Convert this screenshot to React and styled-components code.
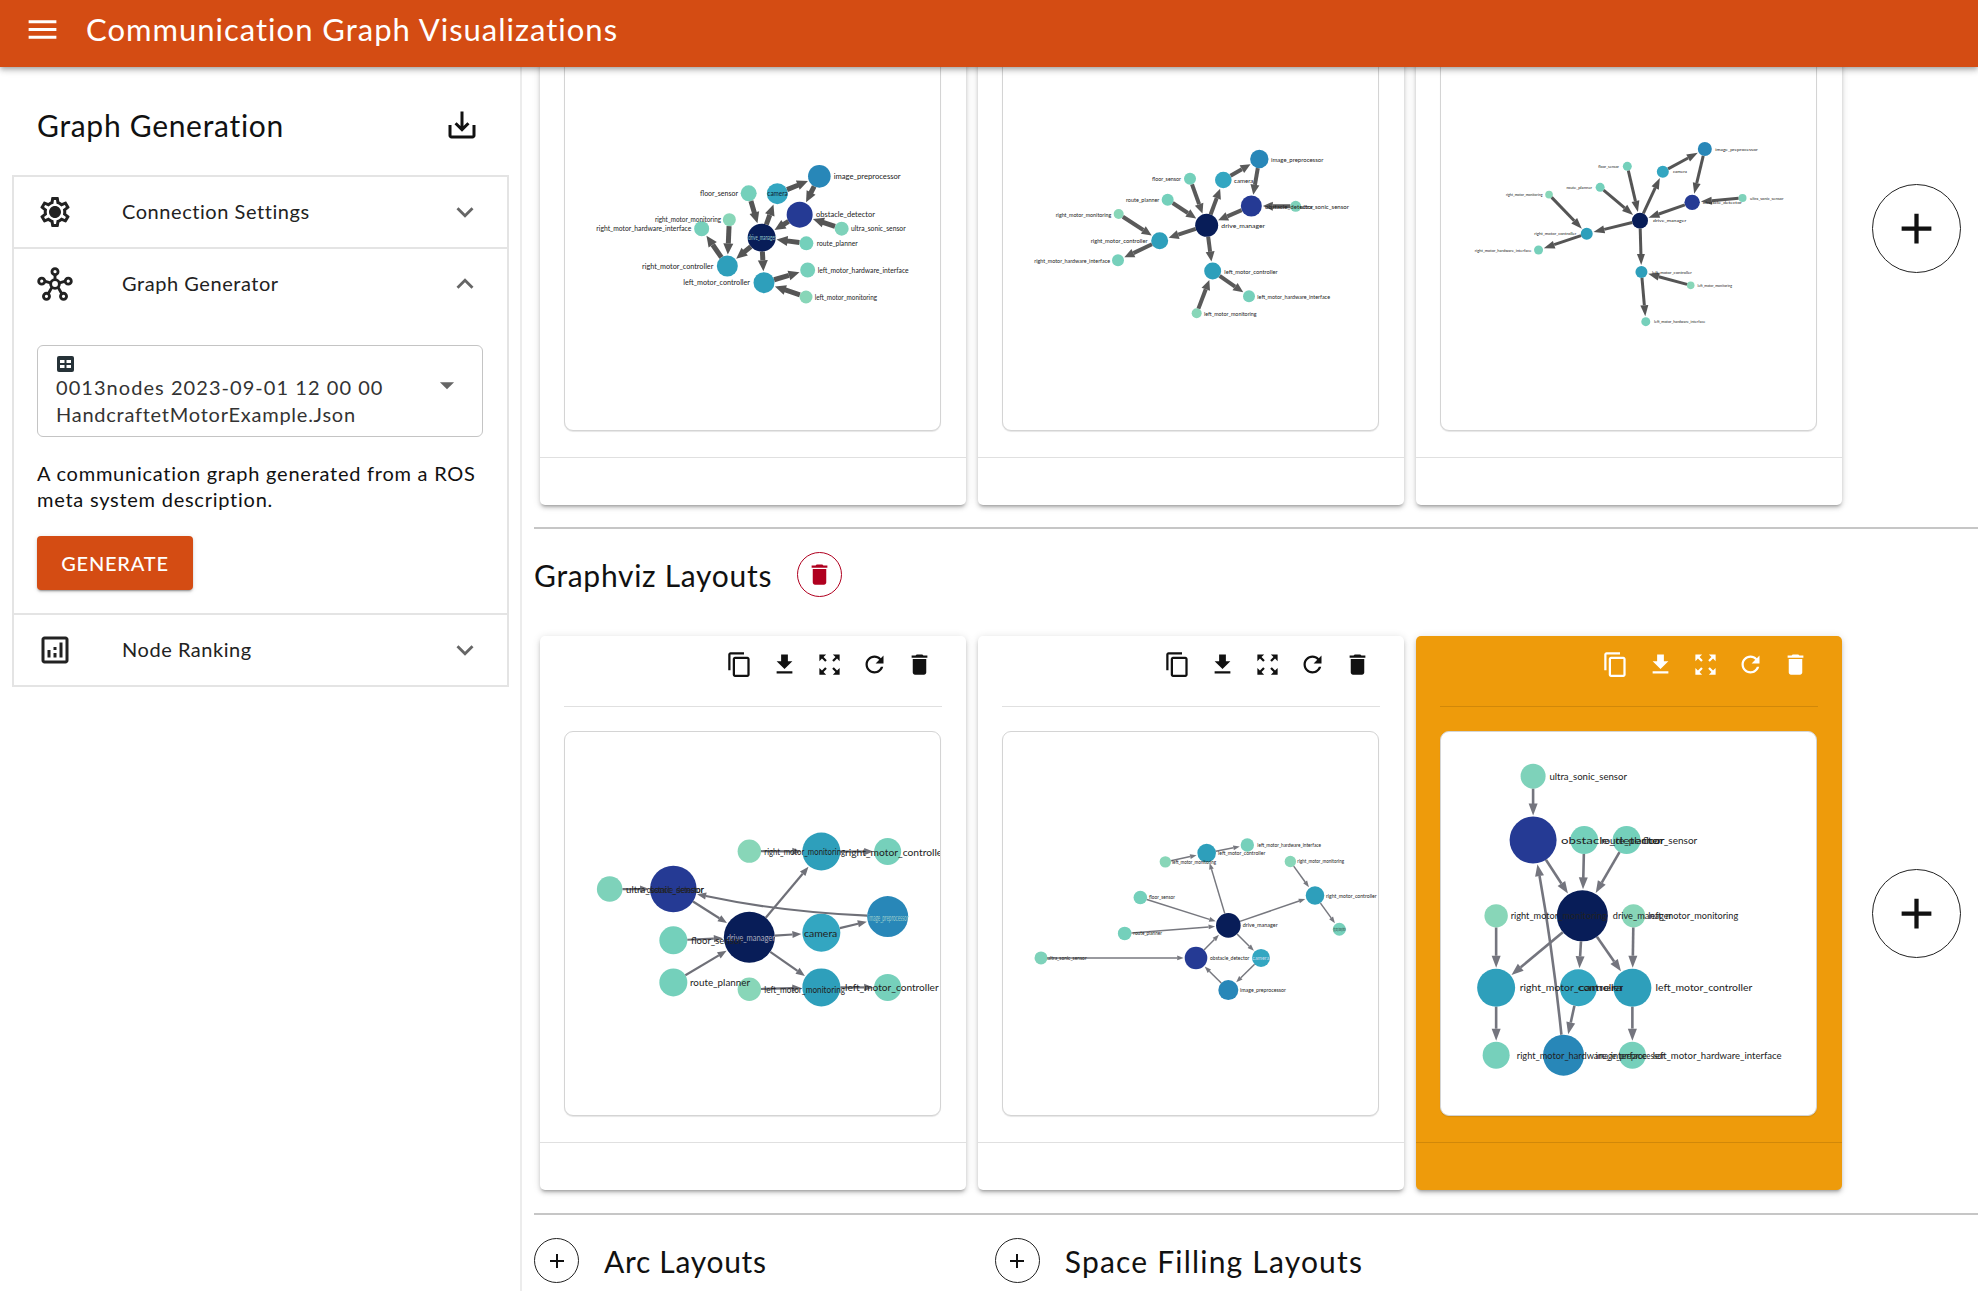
import React from 'react';
import styled, { createGlobalStyle } from 'styled-components';

const FONT = `Lato, "Open Sans", sans-serif`;
const ORANGE = '#d44c13';

const GlobalStyle = createGlobalStyle`
  * { box-sizing: border-box; }
  html, body { margin: 0; height: 100%; overflow: hidden; background: #fff; }
  body { font-family: ${FONT}; color: #111; }
`;

// icon paths
const P = {
  menu: 'M3 18h18v-2H3v2zm0-5h18v-2H3v2zm0-5h18V6H3v2z',
  save: 'M19 12v7H5v-7H3v7c0 1.1.9 2 2 2h14c1.1 0 2-.9 2-2v-7h-2zm-6 .67l2.59-2.58L17 11.5l-5 5-5-5 1.41-1.41L11 12.67V3h2z',
  gear: 'M19.43 12.98c.04-.32.07-.64.07-.98 0-.34-.03-.66-.07-.98l2.11-1.65c.19-.15.24-.42.12-.64l-2-3.46c-.09-.16-.26-.25-.44-.25-.06 0-.12.01-.17.03l-2.49 1c-.52-.4-1.08-.73-1.69-.98l-.38-2.65C14.46 2.18 14.25 2 14 2h-4c-.25 0-.46.18-.49.42l-.38 2.65c-.61.25-1.17.59-1.69.98l-2.49-1c-.06-.02-.12-.03-.18-.03-.17 0-.34.09-.43.25l-2 3.46c-.13.22-.07.49.12.64l2.11 1.65c-.04.32-.07.65-.07.98 0 .33.03.66.07.98l-2.11 1.65c-.19.15-.24.42-.12.64l2 3.46c.09.16.26.25.44.25.06 0 .12-.01.17-.03l2.49-1c.52.4 1.08.73 1.69.98l.38 2.65c.03.24.24.42.49.42h4c.25 0 .46-.18.49-.42l.38-2.65c.61-.25 1.17-.59 1.69-.98l2.49 1c.06.02.12.03.18.03.17 0 .34-.09.43-.25l2-3.46c.12-.22.07-.49-.12-.64l-2.11-1.65zm-1.98-1.71c.04.31.05.52.05.73 0 .21-.02.43-.05.73l-.14 1.13.89.7 1.08.84-.7 1.21-1.27-.51-1.04-.42-.9.68c-.43.32-.84.56-1.25.73l-1.06.43-.16 1.13-.2 1.35h-1.4l-.19-1.35-.16-1.13-1.06-.43c-.43-.18-.83-.41-1.23-.71l-.91-.7-1.06.43-1.27.51-.7-1.21 1.08-.84.89-.7-.14-1.13c-.03-.31-.05-.54-.05-.74s.02-.43.05-.73l.14-1.13-.89-.7-1.08-.84.7-1.21 1.27.51 1.04.42.9-.68c.43-.32.84-.56 1.25-.73l1.06-.43.16-1.13.2-1.35h1.39l.19 1.35.16 1.13 1.06.43c.43.18.83.41 1.23.71l.91.7 1.06-.43 1.27-.51.7 1.21-1.07.85-.89.7.14 1.13zM12 8c-2.21 0-4 1.79-4 4s1.79 4 4 4 4-1.79 4-4-1.79-4-4-4z',
  analytics: 'M19 3H5c-1.1 0-2 .9-2 2v14c0 1.1.9 2 2 2h14c1.1 0 2-.9 2-2V5c0-1.1-.9-2-2-2zm0 16H5V5h14v14zM7 12h2v5H7zm8-5h2v10h-2zm-4 7h2v3h-2zm0-4h2v2h-2z',
  more: 'M16.59 8.59L12 13.17 7.41 8.59 6 10l6 6 6-6z',
  less: 'M12 8l-6 6 1.41 1.41L12 10.83l4.59 4.58L18 14z',
  drop: 'M7 10l5 5 5-5z',
  copy: 'M16 1H4c-1.1 0-2 .9-2 2v14h2V3h12V1zm3 4H8c-1.1 0-2 .9-2 2v14c0 1.1.9 2 2 2h11c1.1 0 2-.9 2-2V7c0-1.1-.9-2-2-2zm0 16H8V7h11v14z',
  download: 'M19 9h-4V3H9v6H5l7 7 7-7zM5 18v2h14v-2H5z',
  zoom: 'M15 3l2.3 2.3-2.89 2.87 1.42 1.42L18.7 6.7 21 9V3zM3 9l2.3-2.3 2.87 2.89 1.42-1.42L6.7 5.3 9 3H3zm6 12l-2.3-2.3 2.89-2.87-1.42-1.42L5.3 17.3 3 15v6zm12-6l-2.3 2.3-2.87-2.89-1.42 1.42 2.89 2.87L15 21h6z',
  refresh: 'M17.65 6.35C16.2 4.9 14.21 4 12 4c-4.42 0-7.99 3.58-7.99 8s3.57 8 7.99 8c3.73 0 6.84-2.55 7.73-6h-2.08c-.82 2.33-3.04 4-5.65 4-3.31 0-6-2.69-6-6s2.69-6 6-6c1.66 0 3.14.69 4.22 1.78L13 11h7V4l-2.35 2.35z',
  trash: 'M6 19c0 1.1.9 2 2 2h8c1.1 0 2-.9 2-2V7H6v12zM19 4h-3.5l-1-1h-5l-1 1H5v2h14V4z',
  add: 'M19 13h-6v6h-2v-6H5v-2h6V5h2v6h6v2z',
};

const Icon = ({ d, size = 24 }) => (
  <svg width={size} height={size} viewBox="0 0 24 24" fill="currentColor"><path d={d} /></svg>
);

const HubIcon = () => (
  <svg width="38" height="36" viewBox="-19 -18 38 36" fill="none" stroke="currentColor" strokeWidth="3">
    <path d="M0 -4V-10M-4 -1L-11 -3M4 -1L11 -3M-3 3L-7 10M3 3L7 10" />
    <circle r="4.6" />
    <circle cy="-13" r="3.2" />
    <circle cx="-14" cy="-3" r="3.2" />
    <circle cx="14" cy="-3" r="3.2" />
    <circle cx="-9" cy="13" r="3.2" />
    <circle cx="9" cy="13" r="3.2" />
  </svg>
);

const GridIcon = () => (
  <svg width="17" height="16" viewBox="0 0 17 16">
    <rect width="17" height="16" rx="2" fill="#263238" />
    <path d="M3 4h4.5v3H3zM9.5 4H14v3H9.5zM3 9h4.5v3H3zM9.5 9H14v3H9.5z" fill="#fff" />
  </svg>
);

// graphs
const LABELS = {
  drive: 'drive_manager', obstacle: 'obstacle_detector', image: 'image_preprocessor', camera: 'camera',
  floor: 'floor_sensor', route: 'route_planner', ultra: 'ultra_sonic_sensor',
  rmon: 'right_motor_monitoring', rctl: 'right_motor_controller', rhw: 'right_motor_hardware_interface',
  lmon: 'left_motor_monitoring', lctl: 'left_motor_controller', lhw: 'left_motor_hardware_interface',
};

const COLORS = {
  drive: '#081d58', obstacle: '#253a94', image: '#2887b8', camera: '#33a6c1',
  rctl: '#2e9fbb', lctl: '#2e9fbb',
  floor: '#74d0bb', route: '#74d0bb', ultra: '#7ed2ba', rmon: '#88d6b8', lmon: '#88d6b8', rhw: '#76d0bb', lhw: '#76d0bb',
};

const EDGES = [
  ['drive', 'camera'], ['camera', 'image'], ['image', 'obstacle'], ['ultra', 'obstacle'], ['obstacle', 'drive'],
  ['floor', 'drive'], ['route', 'drive'], ['drive', 'rctl'], ['drive', 'lctl'], ['rmon', 'rctl'], ['rctl', 'rhw'],
  ['lmon', 'lctl'], ['lctl', 'lhw'],
];

// node: [x, y, radius, label start, label end, label y, label fill], x/y read off the reference crops
const GRAPHS = {
  spring1: {
    sx: 3, sy: 3, ox: 35, oy: -14, font: 7.2, line: 5, head: [11, 5], edge: '#555',
    nodes: {
      image: [868, 346, 11.3, 911, 1112], camera: [742, 398, 10.5, 712, 773, 398, '#123'], obstacle: [809, 461, 13, 858, 1035],
      drive: [695, 530, 14, 655, 738, 530, '#9cc'], floor: [656, 397, 8, 510, 624], rmon: [598, 476, 6.5, 375, 573],
      rhw: [515, 503, 7.5, 199, 484], ultra: [935, 503, 7, 963, 1127], route: [829, 547, 7, 860, 983],
      rctl: [592, 615, 10.5, 336, 550], lctl: [702, 665, 10.5, 460, 660], lhw: [833, 627, 7.5, 863, 1136], lmon: [828, 708, 6.5, 854, 1041],
    },
  },
  spring2: {
    sx: 3, sy: 3, ox: 23, oy: -14, font: 5.6, line: 4, head: [10, 4.5], edge: '#5a5a5a',
    nodes: {
      image: [838, 294, 9.2, 873, 1030], camera: [730, 357, 8.3, 762, 820], obstacle: [814, 435, 10.5, 855, 1000],
      ultra: [947, 436, 5.5, 960, 1107], drive: [680, 493, 11.5, 724, 855], floor: [630, 353, 6, 516, 603],
      route: [563, 416, 6, 438, 538], rmon: [416, 459, 5, 227, 394], rctl: [539, 539, 8.5, 332, 503],
      rhw: [414, 598, 6, 163, 390], lctl: [698, 630, 8.5, 733, 893], lhw: [807, 706, 6, 832, 1050], lmon: [650, 757, 5, 672, 830],
    },
  },
  spring3: {
    sx: 2.76, sy: 3, ox: 30, oy: -14, font: 4, line: 3, head: [11, 4], edge: '#555',
    nodes: {
      image: [811, 264, 7, 840, 957], camera: [695, 332, 6, 723, 762], floor: [597, 316, 4.5, 517, 574],
      route: [522, 379, 4.5, 429, 500], rmon: [381, 401, 3.8, 262, 363], obstacle: [776, 424, 7.7, 805, 913],
      ultra: [915, 411, 4, 936, 1028], drive: [632, 479, 8, 668, 760], rctl: [485, 518, 6, 340, 456],
      rhw: [352, 567, 4.5, 176, 332], lctl: [636, 633, 6, 665, 775], lmon: [772, 673, 3.8, 791, 886], lhw: [648, 782, 4.5, 671, 812],
    },
  },
  dot1: {
    sx: 3, sy: 2.613, ox: 35, oy: 112, font: 10, line: 2.2, head: [9, 3.6], edge: '#6f7078', bend: -9,
    nodes: {
      ultra: [239, 703, 12.8, 288, 522], obstacle: [430, 703, 23.3, 350, 520], drive: [658, 829, 25.5, 590, 735, 829, '#aab'],
      floor: [430, 837, 14, 483, 638], route: [430, 947, 14, 480, 660], rmon: [658, 604, 11.7, 703, 945],
      rctl: [874, 605, 19, 945, 1248], rhw: [1073, 605, 13.5], image: [1073, 775, 20.5, 1015, 1135, 775, '#9cc'],
      camera: [874, 817, 19, 822, 922], lctl: [874, 960, 19, 945, 1226], lmon: [658, 965, 11.7, 703, 945], lhw: [1073, 960, 13.5],
    },
  },
  dot2: {
    sx: 3, sy: 2.613, ox: 23, oy: 112, font: 4.8, line: 1.5, head: [6.5, 2.4], edge: '#77787f',
    nodes: {
      lhw: [802, 588, 6.7, 832, 1023], lctl: [680, 609, 9.3, 714, 856], lmon: [556, 632, 5.7, 576, 708],
      rmon: [931, 631, 5.7, 952, 1092], rctl: [1005, 720, 9.3, 1038, 1190], floor: [481, 725, 6.8, 507, 585],
      route: [434, 819, 6.8, 460, 546], drive: [745, 798, 12.3, 788, 893], ultra: [183, 883, 6.5, 202, 320],
      obstacle: [648, 883, 11.3, 690, 808], camera: [843, 883, 9, 817, 868, 883, '#cde'], image: [745, 967, 10, 780, 918],
      rhw: [1078, 808, 6.5, 1060, 1097],
    },
  },
  dot3: {
    sx: 2.76, sy: 2.613, ox: 30, oy: 112, font: 9.6, line: 2.6, head: [12, 4.5], edge: '#74757e', bend: 4,
    nodes: {
      ultra: [337, 408, 12.5, 382, 596], obstacle: [337, 575, 23.5, 414, 700], floor: [595, 575, 14, 640, 790],
      route: [478, 575, 14, 525, 690], drive: [473, 773, 25.5, 557, 720], rmon: [235, 773, 11.7, 275, 540],
      lmon: [614, 773, 11.7, 655, 903], rctl: [235, 961, 19, 300, 585], camera: [462, 961, 18.5, 460, 585],
      lctl: [611, 961, 19, 675, 942], rhw: [235, 1137, 13.5, 292, 650], image: [421, 1137, 20.5, 510, 700], lhw: [611, 1137, 13.5, 667, 1023],
    },
  },
};

const Edge = ({ a, b, bend, graph }) => {
  const mx = (a.x + b.x) / 2;
  const my = (a.y + b.y) / 2;
  const len = Math.hypot(b.x - a.x, b.y - a.y);
  const cx = mx - ((b.y - a.y) / len) * bend;
  const cy = my + ((b.x - a.x) / len) * bend;
  const l1 = Math.hypot(cx - a.x, cy - a.y);
  const l2 = Math.hypot(b.x - cx, b.y - cy);
  const sx = a.x + ((cx - a.x) / l1) * a.r;
  const sy = a.y + ((cy - a.y) / l1) * a.r;
  const ux = (b.x - cx) / l2;
  const uy = (b.y - cy) / l2;
  const tx = b.x - ux * (b.r + 1);
  const ty = b.y - uy * (b.r + 1);
  const [hl, hw] = graph.head;
  const base = [tx - ux * hl, ty - uy * hl];
  const points = [
    `${tx},${ty}`,
    `${base[0] - uy * hw},${base[1] + ux * hw}`,
    `${base[0] + uy * hw},${base[1] - ux * hw}`,
  ].join(' ');
  return (
    <g>
      <path d={`M${sx} ${sy}Q${cx} ${cy} ${base[0]} ${base[1]}`} fill="none" stroke={graph.edge} strokeWidth={graph.line} />
      <polygon points={points} fill={graph.edge} />
    </g>
  );
};

const GraphSvg = styled.svg`
  display: block;
  width: 100%;
  height: 100%;
  font-family: ${FONT};
`;

const Graph = ({ name }) => {
  const graph = GRAPHS[name];
  const nodes = {};
  Object.entries(graph.nodes).forEach(([key, n]) => {
    nodes[key] = { x: n[0] / graph.sx - graph.ox, y: n[1] / graph.sy - graph.oy, r: n[2] };
  });
  return (
    <GraphSvg viewBox="0 0 375 383">
      {Object.entries(nodes).map(([key, n]) => <circle key={key} cx={n.x} cy={n.y} r={n.r} fill={COLORS[key]} />)}
      {EDGES.map(([from, to]) => (
        <Edge key={from + to} a={nodes[from]} b={nodes[to]} graph={graph} bend={from === 'image' && to === 'obstacle' ? graph.bend || 0 : 0} />
      ))}
      {Object.entries(graph.nodes).filter(([, n]) => n[3]).map(([key, n]) => (
        <text
          key={key}
          x={n[3] / graph.sx - graph.ox}
          y={(n[5] || n[1]) / graph.sy - graph.oy}
          fontSize={graph.font}
          fill={n[6] || '#222'}
          dominantBaseline="central"
          textLength={(n[4] - n[3]) / graph.sx}
          lengthAdjust="spacingAndGlyphs"
        >
          {LABELS[key]}
        </text>
      ))}
    </GraphSvg>
  );
};

// header
const Page = styled.div`
  display: flex;
  flex-direction: column;
  height: 100vh;
  overflow: hidden;
`;

const Header = styled.header`
  flex: none;
  position: relative;
  z-index: 2;
  height: 67px;
  padding: 0 0 9px 24px;
  display: flex;
  align-items: center;
  gap: 25px;
  background: ${ORANGE};
  color: #fff;
  box-shadow: 0 2px 4px -1px rgba(0,0,0,.2), 0 4px 5px rgba(0,0,0,.14), 0 1px 10px rgba(0,0,0,.12);
`;

const HeaderTitle = styled.h1`
  margin: 0;
  font-size: 31px;
  font-weight: 400;
  letter-spacing: 1px;
`;

const Body = styled.div`
  flex: 1;
  display: flex;
  min-height: 0;
`;

// sidebar
const Sidebar = styled.aside`
  flex: none;
  width: 522px;
  padding: 0 12px;
  border-right: 2px solid #ececec;
`;

const SidebarHead = styled.div`
  height: 108px;
  padding: 7px 28px 0 25px;
  display: flex;
  align-items: center;
  justify-content: space-between;
`;

const SidebarTitle = styled.h2`
  margin: 0;
  font-size: 30px;
  font-weight: 400;
  letter-spacing: .7px;
`;

const Accordion = styled.div`
  width: 497px;
  border: 2px solid #e4e4e4;
`;

const Panel = styled.section`
  & + & { border-top: 2px solid #e4e4e4; }
`;

const PanelHead = styled.div`
  height: ${p => p.$h}px;
  padding: 0 25px 0 23px;
  display: flex;
  align-items: center;
  color: #222;
`;

const PanelIcon = styled.span`
  flex: none;
  width: 36px;
  margin-right: 49px;
  display: flex;
  justify-content: center;
`;

const PanelTitle = styled.span`
  flex: 1;
  padding-bottom: 2px;
  font-size: 20px;
  letter-spacing: .55px;
`;

const Chevron = styled.span`
  display: flex;
  color: #666;
`;

const PanelBody = styled.div`
  padding: 26px 24px 23px 23px;
`;

const SelectBox = styled.div`
  height: 92px;
  padding: 10px 18px 6px 18px;
  display: flex;
  border: 1.5px solid #c4c4c4;
  border-radius: 6px;
`;

const SelectValue = styled.div`
  flex: 1;
  font-size: 20px;
  line-height: 27px;
  color: #333;

  svg {
    display: block;
    margin: 0 0 2px 1px;
  }
`;

const SelectLine = styled.div`
  letter-spacing: ${p => p.$track}px;
`;

const SelectArrow = styled.span`
  align-self: flex-start;
  margin-top: 12px;
  display: flex;
  color: #666;
`;

const Description = styled.p`
  margin: 23px 0 24px;
  font-size: 20px;
  line-height: 26px;
  letter-spacing: .75px;
`;

const GenerateButton = styled.button`
  display: block;
  width: 156px;
  height: 54px;
  border: 0;
  border-radius: 4px;
  background: ${ORANGE};
  color: #fff;
  font: 500 20px ${FONT};
  letter-spacing: .8px;
  box-shadow: 0 3px 1px -2px rgba(0,0,0,.2), 0 2px 2px rgba(0,0,0,.14), 0 1px 5px rgba(0,0,0,.12);
`;

// main column
const Main = styled.main`
  flex: 1;
  min-width: 0;
  overflow: hidden;
`;

// the column is scrolled in the reference, so the first row starts under the header
const ScrollContent = styled.div`
  margin-top: -116px;
  padding-left: 12px;
`;

const Rule = styled.hr`
  margin: ${p => p.$gap}px 0 0;
  height: 2px;
  border: 0;
  background: #c6c6c6;
`;

const SectionHead = styled.div`
  height: 45px;
  margin: 23px 0 39px;
  display: flex;
  align-items: center;
  gap: 25px;
`;

const SectionTitle = styled.h2`
  margin: 0;
  font-size: 30px;
  font-weight: 400;
  letter-spacing: ${p => p.$track || 0.7}px;
`;

const RoundButton = styled.button`
  flex: none;
  width: ${p => p.$size}px;
  height: ${p => p.$size}px;
  padding: 0;
  display: flex;
  align-items: center;
  justify-content: center;
  border-radius: 50%;
  border: 1.5px solid ${p => p.$color || '#222'};
  background: transparent;
  color: ${p => p.$color || '#111'};
`;

const CardRow = styled.div`
  padding-left: 6px;
  display: flex;
  align-items: center;
  gap: 12px;
`;

const AddSlot = styled.div`
  margin-left: 18px;
`;

const Card = styled.article`
  flex: none;
  width: 426px;
  height: 554px;
  border-radius: 5px;
  background: ${p => (p.$selected ? '#ee9b0b' : '#fff')};
  box-shadow: 0 3px 3px -2px rgba(0,0,0,.25), 0 3px 4px rgba(0,0,0,.14), 0 1px 8px rgba(0,0,0,.12);
`;

const Toolbar = styled.div`
  height: 70px;
  padding: 6px 24px 0 0;
  display: flex;
  align-items: flex-start;
  justify-content: flex-end;
  color: ${p => (p.$selected ? '#fff' : '#111')};
`;

const ToolButton = styled.span`
  width: 45px;
  height: 45px;
  display: flex;
  align-items: center;
  justify-content: center;
`;

const CardRule = styled.div`
  height: 1px;
  margin: ${p => (p.$inset ? '0 24px' : '0')};
  background: rgba(0,0,0,.12);
`;

const GraphBox = styled.div`
  width: 377px;
  height: 385px;
  margin: 24px 25px 26px 24px;
  overflow: hidden;
  background: #fff;
  border: 1px solid #d4d4d4;
  border-radius: 9px;
  box-shadow: 0 1px 1px rgba(0,0,0,.1);
`;

const CollapsedRow = styled.div`
  margin-top: 23px;
  display: flex;
  align-items: center;
  gap: 228px;
`;

const CollapsedItem = styled.div`
  display: flex;
  align-items: center;
  gap: 25px;
`;

const VizCard = ({ graph, selected }) => (
  <Card $selected={selected}>
    <Toolbar $selected={selected}>
      {[P.copy, P.download, P.zoom, P.refresh, P.trash].map(d => (
        <ToolButton key={d}><Icon d={d} size={27} /></ToolButton>
      ))}
    </Toolbar>
    <CardRule $inset />
    <GraphBox><Graph name={graph} /></GraphBox>
    <CardRule />
  </Card>
);

const VizRow = ({ graphs, selected }) => (
  <CardRow>
    {graphs.map(g => <VizCard key={g} graph={g} selected={g === selected} />)}
    <AddSlot>
      <RoundButton $size={89}><Icon d={P.add} size={51} /></RoundButton>
    </AddSlot>
  </CardRow>
);

export default function App() {
  return (
    <Page>
      <GlobalStyle />
      <Header>
        <Icon d={P.menu} size={37} />
        <HeaderTitle>Communication Graph Visualizations</HeaderTitle>
      </Header>
      <Body>
        <Sidebar>
          <SidebarHead>
            <SidebarTitle>Graph Generation</SidebarTitle>
            <Icon d={P.save} size={36} />
          </SidebarHead>
          <Accordion>
            <Panel>
              <PanelHead $h={70}>
                <PanelIcon><Icon d={P.gear} size={36} /></PanelIcon>
                <PanelTitle>Connection Settings</PanelTitle>
                <Chevron><Icon d={P.more} size={34} /></Chevron>
              </PanelHead>
            </Panel>
            <Panel>
              <PanelHead $h={70}>
                <PanelIcon><HubIcon /></PanelIcon>
                <PanelTitle>Graph Generator</PanelTitle>
                <Chevron><Icon d={P.less} size={34} /></Chevron>
              </PanelHead>
              <PanelBody>
                <SelectBox>
                  <SelectValue>
                    <GridIcon />
                    <SelectLine $track={1.05}>0013nodes 2023-09-01 12 00 00</SelectLine>
                    <SelectLine $track={0.75}>HandcraftetMotorExample.Json</SelectLine>
                  </SelectValue>
                  <SelectArrow><Icon d={P.drop} size={34} /></SelectArrow>
                </SelectBox>
                <Description>A communication graph generated from a ROS meta system description.</Description>
                <GenerateButton>GENERATE</GenerateButton>
              </PanelBody>
            </Panel>
            <Panel>
              <PanelHead $h={70}>
                <PanelIcon><Icon d={P.analytics} size={36} /></PanelIcon>
                <PanelTitle>Node Ranking</PanelTitle>
                <Chevron><Icon d={P.more} size={34} /></Chevron>
              </PanelHead>
            </Panel>
          </Accordion>
        </Sidebar>
        <Main>
          <ScrollContent>
            <VizRow graphs={['spring1', 'spring2', 'spring3']} />
            <Rule $gap={22} />
            <SectionHead>
              <SectionTitle>Graphviz Layouts</SectionTitle>
              <RoundButton $size={45} $color="#b0001f"><Icon d={P.trash} size={27} /></RoundButton>
            </SectionHead>
            <VizRow graphs={['dot1', 'dot2', 'dot3']} selected="dot3" />
            <Rule $gap={23} />
            <CollapsedRow>
              <CollapsedItem>
                <RoundButton $size={45}><Icon d={P.add} size={24} /></RoundButton>
                <SectionTitle>Arc Layouts</SectionTitle>
              </CollapsedItem>
              <CollapsedItem>
                <RoundButton $size={45}><Icon d={P.add} size={24} /></RoundButton>
                <SectionTitle $track={1.2}>Space Filling Layouts</SectionTitle>
              </CollapsedItem>
            </CollapsedRow>
          </ScrollContent>
        </Main>
      </Body>
    </Page>
  );
}
